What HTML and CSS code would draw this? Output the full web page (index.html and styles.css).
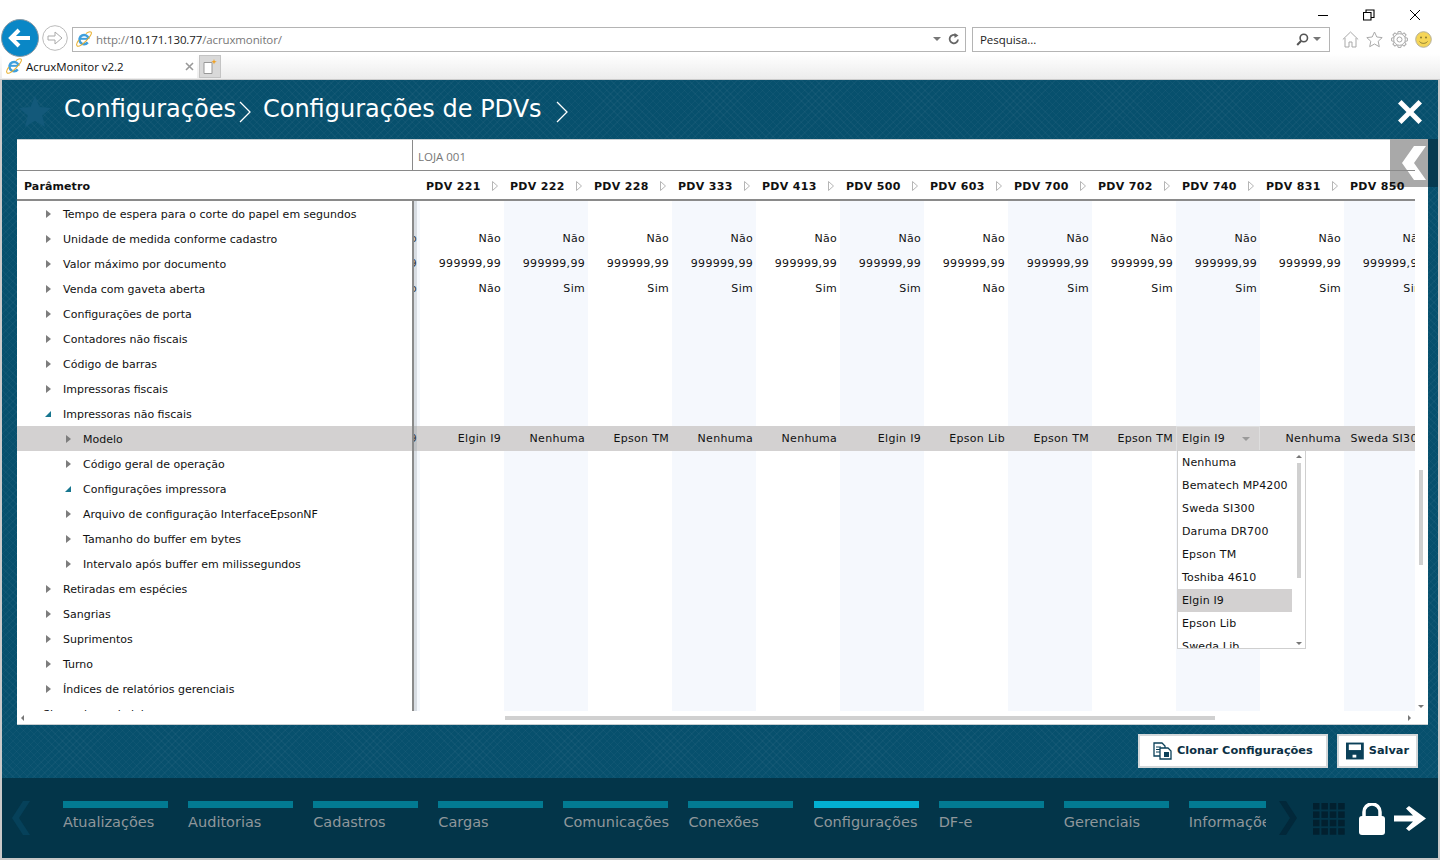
FILE: index.html
```html
<!DOCTYPE html>
<html lang="pt-BR">
<head>
<meta charset="utf-8">
<title>AcruxMonitor v2.2</title>
<link rel="stylesheet" href="styles.css">
</head>
<body>
<svg class="defs" width="0" height="0" aria-hidden="true">
  <symbol id="ie" viewBox="0 0 18 18">
    <path d="M4.500 8.800h9" stroke="#3f9fdc" stroke-width="2.200" fill="none"/>
    <path d="M14.200 8.800a5.200 5.200 0 1 0-1 4" stroke="#3f9fdc" stroke-width="2.800" fill="none"/>
    <path d="M11 3c2.600-1.800 5-2.600 6-1.600 1.200 1.200-1.200 5.400-5.600 9.600S2.600 18 1.200 16.600C.2 15.600 1 13.100 3 10.300" fill="none" stroke="#e8b030" stroke-width="1.200"/>
  </symbol>
  <symbol id="tri" viewBox="0 0 6 10"><path d="M.5.500 5.500 5 .5 9.500z" fill="#fff" stroke="#b5b5b5"/></symbol>
</svg>

<header class="browser">
  <div class="caption">
    <svg class="wbtn" width="12" height="12" viewBox="0 0 12 12"><path d="M1 6.500h10" stroke="#000" fill="none"/></svg>
    <svg class="wbtn" width="12" height="12" viewBox="0 0 12 12"><path d="M.5 3.500h7.500v7.500H.5zM3 3.300V1h8v7.500H8.200" stroke="#000" fill="none" stroke-width="1.100"/></svg>
    <svg class="wbtn" width="12" height="12" viewBox="0 0 12 12"><path d="M1 1l10 10M11 1 1 11" stroke="#000" fill="none"/></svg>
  </div>
  <div class="navrow">
    <svg class="back" width="38" height="38" viewBox="0 0 38 38"><circle cx="19" cy="19" r="18.500" fill="#0a87c6" stroke="#8a9aa5"/><path d="M29 19H11M18 11l-8 8 8 8" fill="none" stroke="#fff" stroke-width="4"/></svg>
    <svg class="forward" width="26" height="26" viewBox="0 0 26 26"><circle cx="13" cy="13" r="12.300" fill="#fff" stroke="#bbb"/><path d="M6 11h7V7l7 6-7 6v-4H6z" fill="#fff" stroke="#aaa"/></svg>
    <div class="address">
      <svg class="ie" width="16" height="16"><use href="#ie"/></svg>
      <span class="url">http://<b>10.171.130.77</b>/acruxmonitor/</span>
      <i class="caret"></i>
      <svg class="refresh" width="12" height="12" viewBox="0 0 12 12"><path d="M10 6.500a4.200 4.200 0 1 1-2-4" fill="none" stroke="#666" stroke-width="1.800"/><path d="M6.500 0v5l4-2.500z" fill="#666"/></svg>
    </div>
    <div class="search">
      <span class="search-text">Pesquisa...</span>
      <svg width="13" height="13" viewBox="0 0 13 13"><circle cx="7.800" cy="5" r="3.700" fill="none" stroke="#555" stroke-width="1.600"/><path d="M5 8 1.200 12" stroke="#555" stroke-width="2"/></svg>
      <i class="caret"></i>
    </div>
    <div class="tools">
      <svg width="17" height="17" viewBox="0 0 17 17"><path d="M.8 8.500 8.500 1l7.700 7.500M3 7v9h4v-5h3v5h4V7" fill="none" stroke="#a9a9a9"/></svg>
      <svg width="17" height="17" viewBox="0 0 17 17"><path d="m8.500 1 2.300 5 5.400.6-4 3.700 1.100 5.400-4.800-2.700-4.800 2.700 1.100-5.400-4-3.700 5.400-.6z" fill="#fff" stroke="#a9a9a9"/></svg>
      <svg width="17" height="17" viewBox="0 0 17 17" fill="none" stroke="#a9a9a9">
        <circle cx="8.500" cy="8.500" r="2.500"/><circle cx="8.500" cy="8.500" r="5.800"/>
        <path d="M6.600 2.800 7.100.6h2.800l.5 2.200"/>
        <path d="M6.600 2.800 7.100.6h2.800l.5 2.200" transform="rotate(45 8.500 8.500)"/>
        <path d="M6.600 2.800 7.100.6h2.800l.5 2.200" transform="rotate(90 8.500 8.500)"/>
        <path d="M6.600 2.800 7.100.6h2.800l.5 2.200" transform="rotate(135 8.500 8.500)"/>
        <path d="M6.600 2.800 7.100.6h2.800l.5 2.200" transform="rotate(180 8.500 8.500)"/>
        <path d="M6.600 2.800 7.100.6h2.800l.5 2.200" transform="rotate(225 8.500 8.500)"/>
        <path d="M6.600 2.800 7.100.6h2.800l.5 2.200" transform="rotate(270 8.500 8.500)"/>
        <path d="M6.600 2.800 7.100.6h2.800l.5 2.200" transform="rotate(315 8.500 8.500)"/>
      </svg>
      <svg width="17" height="17" viewBox="0 0 17 17"><circle cx="8.500" cy="8.500" r="7.800" fill="#f5d557" stroke="#b5b09a"/><circle cx="6" cy="6.500" r="1" fill="#8a7a30"/><circle cx="11" cy="6.500" r="1" fill="#8a7a30"/><path d="M4.500 10.500c2 2.500 6 2.500 8 0" fill="none" stroke="#8a7a30"/></svg>
    </div>
  </div>
  <div class="tabrow">
    <div class="tab">
      <svg width="16" height="16"><use href="#ie"/></svg>
      <span class="tab-title">AcruxMonitor v2.2</span>
      <svg class="tab-x" width="9" height="9" viewBox="0 0 9 9"><path d="M1 1l7 7M8 1 1 8" stroke="#999" stroke-width="1.600"/></svg>
    </div>
    <div class="newtab">
      <svg width="14" height="15" viewBox="0 0 14 15"><path d="M1 3.500h8v11H1z" fill="#fff" stroke="#999"/><path d="m11 0 .7 2 2 .7-2 .7-.7 2-.7-2-2-.7 2-.7z" fill="#f0a020"/></svg>
    </div>
  </div>
</header>

<main class="app">
  <div class="app-head">
    <svg class="star" width="32" height="31" viewBox="0 0 32 31"><path d="m16 0 4.500 11L32 12l-8.800 7.400L26 31l-10-6.300L6 31l2.800-11.600L0 12l11.500-1z" fill="#13597a"/></svg>
    <h1 class="crumb">Configurações</h1>
    <svg class="crumb-sep" width="12" height="22" viewBox="0 0 12 22"><path d="m1 1 10 10L1 21" fill="none" stroke="#fff" stroke-width="1.300"/></svg>
    <h1 class="crumb crumb-2">Configurações de PDVs</h1>
    <svg class="crumb-sep" width="12" height="22" viewBox="0 0 12 22"><path d="m1 1 10 10L1 21" fill="none" stroke="#fff" stroke-width="1.300"/></svg>
    <svg class="close" width="26" height="26" viewBox="0 0 26 26"><path d="M4.500 1 13 9.500 21.500 1 25 4.500 16.500 13l8.500 8.500-3.500 3.500L13 16.500 4.500 25 1 21.500 9.500 13 1 4.500z" fill="#fff"/></svg>
  </div>

  <section class="panel">
    <div class="store-row">
      <div class="store-blank"></div>
      <div class="store-name">LOJA 001</div>
    </div>
    <div class="head-row">
      <div class="param-head">Parâmetro</div>
      <div class="pdv-heads">
        <div class="pdv-head"><span>PDV 221</span><svg width="6" height="10"><use href="#tri"/></svg></div>
        <div class="pdv-head"><span>PDV 222</span><svg width="6" height="10"><use href="#tri"/></svg></div>
        <div class="pdv-head"><span>PDV 228</span><svg width="6" height="10"><use href="#tri"/></svg></div>
        <div class="pdv-head"><span>PDV 333</span><svg width="6" height="10"><use href="#tri"/></svg></div>
        <div class="pdv-head"><span>PDV 413</span><svg width="6" height="10"><use href="#tri"/></svg></div>
        <div class="pdv-head"><span>PDV 500</span><svg width="6" height="10"><use href="#tri"/></svg></div>
        <div class="pdv-head"><span>PDV 603</span><svg width="6" height="10"><use href="#tri"/></svg></div>
        <div class="pdv-head"><span>PDV 700</span><svg width="6" height="10"><use href="#tri"/></svg></div>
        <div class="pdv-head"><span>PDV 702</span><svg width="6" height="10"><use href="#tri"/></svg></div>
        <div class="pdv-head"><span>PDV 740</span><svg width="6" height="10"><use href="#tri"/></svg></div>
        <div class="pdv-head"><span>PDV 831</span><svg width="6" height="10"><use href="#tri"/></svg></div>
        <div class="pdv-head"><span>PDV 850</span><svg width="6" height="10"><use href="#tri"/></svg></div>
      </div>
    </div>

    <div class="grid-body">
      <ul class="tree">
        <li class="node l1"><i class="arr"></i>Tempo de espera para o corte do papel em segundos</li>
        <li class="node l1"><i class="arr"></i>Unidade de medida conforme cadastro</li>
        <li class="node l1"><i class="arr"></i>Valor máximo por documento</li>
        <li class="node l1"><i class="arr"></i>Venda com gaveta aberta</li>
        <li class="node l1"><i class="arr"></i>Configurações de porta</li>
        <li class="node l1"><i class="arr"></i>Contadores não fiscais</li>
        <li class="node l1"><i class="arr"></i>Código de barras</li>
        <li class="node l1"><i class="arr"></i>Impressoras fiscais</li>
        <li class="node l1"><i class="arr open"></i>Impressoras não fiscais</li>
        <li class="node l2 sel"><i class="arr"></i>Modelo</li>
        <li class="node l2"><i class="arr"></i>Código geral de operação</li>
        <li class="node l2"><i class="arr open"></i>Configurações impressora</li>
        <li class="node l2"><i class="arr"></i>Arquivo de configuração InterfaceEpsonNF</li>
        <li class="node l2"><i class="arr"></i>Tamanho do buffer em bytes</li>
        <li class="node l2"><i class="arr"></i>Intervalo após buffer em milissegundos</li>
        <li class="node l1"><i class="arr"></i>Retiradas em espécies</li>
        <li class="node l1"><i class="arr"></i>Sangrias</li>
        <li class="node l1"><i class="arr"></i>Suprimentos</li>
        <li class="node l1"><i class="arr"></i>Turno</li>
        <li class="node l1"><i class="arr"></i>Índices de relatórios gerenciais</li>
        <li class="node l0"><i class="arr open"></i>Sincronismo de lojas</li>
      </ul>
      <div class="data">
        <div class="data-track">
          <div class="col alt"><div class="cell"></div><div class="cell">Não</div><div class="cell">999999,99</div><div class="cell">Não</div><div class="gap"></div><div class="cell sel">Elgin I9</div></div>
          <div class="col"><div class="cell"></div><div class="cell">Não</div><div class="cell">999999,99</div><div class="cell">Não</div><div class="gap"></div><div class="cell sel">Elgin I9</div></div>
          <div class="col alt"><div class="cell"></div><div class="cell">Não</div><div class="cell">999999,99</div><div class="cell">Sim</div><div class="gap"></div><div class="cell sel">Nenhuma</div></div>
          <div class="col"><div class="cell"></div><div class="cell">Não</div><div class="cell">999999,99</div><div class="cell">Sim</div><div class="gap"></div><div class="cell sel">Epson TM</div></div>
          <div class="col alt"><div class="cell"></div><div class="cell">Não</div><div class="cell">999999,99</div><div class="cell">Sim</div><div class="gap"></div><div class="cell sel">Nenhuma</div></div>
          <div class="col"><div class="cell"></div><div class="cell">Não</div><div class="cell">999999,99</div><div class="cell">Sim</div><div class="gap"></div><div class="cell sel">Nenhuma</div></div>
          <div class="col alt"><div class="cell"></div><div class="cell">Não</div><div class="cell">999999,99</div><div class="cell">Sim</div><div class="gap"></div><div class="cell sel">Elgin I9</div></div>
          <div class="col"><div class="cell"></div><div class="cell">Não</div><div class="cell">999999,99</div><div class="cell">Não</div><div class="gap"></div><div class="cell sel">Epson Lib</div></div>
          <div class="col alt"><div class="cell"></div><div class="cell">Não</div><div class="cell">999999,99</div><div class="cell">Sim</div><div class="gap"></div><div class="cell sel">Epson TM</div></div>
          <div class="col"><div class="cell"></div><div class="cell">Não</div><div class="cell">999999,99</div><div class="cell">Sim</div><div class="gap"></div><div class="cell sel">Epson TM</div></div>
          <div class="col alt"><div class="cell"></div><div class="cell">Não</div><div class="cell">999999,99</div><div class="cell">Sim</div><div class="gap"></div><div class="cell sel combo"><span>Elgin I9</span><i class="combo-arrow"></i></div></div>
          <div class="col"><div class="cell"></div><div class="cell">Não</div><div class="cell">999999,99</div><div class="cell">Sim</div><div class="gap"></div><div class="cell sel">Nenhuma</div></div>
          <div class="col alt"><div class="cell"></div><div class="cell">Não</div><div class="cell">999999,99</div><div class="cell">Sim</div><div class="gap"></div><div class="cell sel">Sweda SI300</div></div>
        </div>
      </div>
      <div class="vscroll"><i class="vthumb"></i><i class="sc-down"></i></div>
    </div>
    <div class="hscroll"><i class="sc-left"></i><i class="hthumb"></i><i class="sc-right"></i></div>

    <div class="dropdown">
      <ul class="dd-list">
        <li>Nenhuma</li>
        <li>Bematech MP4200</li>
        <li>Sweda SI300</li>
        <li>Daruma DR700</li>
        <li>Epson TM</li>
        <li>Toshiba 4610</li>
        <li class="on">Elgin I9</li>
        <li>Epson Lib</li>
        <li>Sweda Lib</li>
      </ul>
      <div class="dd-scroll"><i class="sc-up"></i><i class="dd-thumb"></i><i class="sc-down"></i></div>
    </div>
  </section>

  <div class="collapse-tab">
    <svg width="25" height="34" viewBox="0 0 25 34"><path d="M24 0h-12L0 17l12 17h12L12 17z" fill="#fff"/></svg>
  </div>

  <div class="actions">
    <button class="btn">
      <svg width="19" height="18" viewBox="0 0 19 18"><path d="M1 1h8l3 3v10H1z" fill="#fff" stroke="#0b4059" stroke-width="1.300"/><path d="M3 5h5M3 7.500h5M3 10h5" stroke="#0b4059"/><path d="M7 6h8l3 3v8H7z" fill="#fff" stroke="#0b4059" stroke-width="1.300"/><rect x="11" y="10" width="5" height="5" fill="#0b4059"/></svg>
      <span class="btn-label">Clonar Configurações</span>
    </button>
    <button class="btn">
      <svg width="19" height="18" viewBox="0 0 19 18"><path d="M0 0h19v18H0z" fill="#0b4059"/><rect x="3" y="2" width="13" height="6" fill="#fff"/><rect x="7" y="13" width="4" height="3" fill="#fff"/></svg>
      <span class="btn-label">Salvar</span>
    </button>
  </div>

  <footer class="dock">
    <svg class="dock-prev" width="18" height="34" viewBox="0 0 18 34"><path d="M18 0H11L0 17l11 17h7L7 17z" fill="#06415a"/></svg>
    <nav class="dock-nav">
      <a class="dock-item"><i class="bar"></i>Atualizações</a>
      <a class="dock-item"><i class="bar"></i>Auditorias</a>
      <a class="dock-item"><i class="bar"></i>Cadastros</a>
      <a class="dock-item"><i class="bar"></i>Cargas</a>
      <a class="dock-item"><i class="bar"></i>Comunicações</a>
      <a class="dock-item"><i class="bar"></i>Conexões</a>
      <a class="dock-item active"><i class="bar"></i>Configurações</a>
      <a class="dock-item"><i class="bar"></i>DF-e</a>
      <a class="dock-item"><i class="bar"></i>Gerenciais</a>
      <a class="dock-item"><i class="bar"></i>Informações</a>
    </nav>
    <svg class="dock-next" width="18" height="34" viewBox="0 0 18 34"><path d="M0 0h7l11 17L7 34H0l11-17z" fill="#02283a"/></svg>
    <svg class="dock-grid" width="32" height="32" viewBox="0 0 32 32" fill="#02202f">
      <rect width="6.500" height="6.500"/><rect x="8.400" width="6.500" height="6.500"/><rect x="16.800" width="6.500" height="6.500"/><rect x="25.200" width="6.500" height="6.500"/>
      <rect y="8.400" width="6.500" height="6.500"/><rect x="8.400" y="8.400" width="6.500" height="6.500"/><rect x="16.800" y="8.400" width="6.500" height="6.500"/><rect x="25.200" y="8.400" width="6.500" height="6.500"/>
      <rect y="16.800" width="6.500" height="6.500"/><rect x="8.400" y="16.800" width="6.500" height="6.500"/><rect x="16.800" y="16.800" width="6.500" height="6.500"/><rect x="25.200" y="16.800" width="6.500" height="6.500"/>
      <rect y="25.200" width="6.500" height="6.500"/><rect x="8.400" y="25.200" width="6.500" height="6.500"/><rect x="16.800" y="25.200" width="6.500" height="6.500"/><rect x="25.200" y="25.200" width="6.500" height="6.500"/>
    </svg>
    <svg class="dock-lock" width="26" height="32" viewBox="0 0 26 32"><path d="M5 14V9a8 8 0 0 1 16 0v5" fill="none" stroke="#fff" stroke-width="3.500"/><rect y="13" width="26" height="19" rx="3" fill="#fff"/></svg>
    <svg class="dock-go" width="32" height="25" viewBox="0 0 32 25"><path d="M0 9.500h19L12 2.500 15 0l17 12.500L15 25l-3-2.500 7-7H0z" fill="#fff"/></svg>
  </footer>
</main>
</body>
</html>
```
FILE: styles.css
```css
* { box-sizing: border-box; }
html, body { margin: 0; padding: 0; height: 860px; overflow: hidden; background: #fff; }
body { font-family: "DejaVu Sans", Verdana, sans-serif; font-size: 11px; color: #111; }
ul { list-style: none; margin: 0; padding: 0; }
.defs { position: absolute; }

/* browser chrome */
.browser { height: 80px; background: #fff; font-family: "Open Sans", "Noto Sans", sans-serif; font-size: 11.500px; letter-spacing: -.05px; position: relative; }
.caption { height: 27px; display: flex; justify-content: flex-end; align-items: center; gap: 34px; padding: 2px 19px 0 0; }
.navrow { height: 24px; display: flex; align-items: center; padding-left: 72px; }
.back { position: absolute; left: 1px; top: 19px; }
.forward { position: absolute; left: 42px; top: 25px; }
.address { width: 894px; height: 25px; border: 1px solid #b4b4b4; display: flex; align-items: center; padding: 0 4px 0 3px; background: #fff; }
.ie { margin-right: 4px; }
.url { flex: 1; color: #777; letter-spacing: -.12px; }
.url b { font-weight: 400; color: #222; }
.caret { width: 0; height: 0; border: 4px solid transparent; border-top-color: #777; border-bottom: 0; }
.refresh { margin-left: 7px; margin-right: 1px; }
.search { width: 358px; height: 25px; margin-left: 6px; border: 1px solid #b4b4b4; display: flex; align-items: center; padding: 0 8px 0 7px; gap: 4px; }
.search-text { flex: 1; color: #222; }
.tools { display: flex; gap: 7.300px; margin-left: 12px; }
.tabrow { height: 29px; display: flex; align-items: flex-end; padding: 0 0 0 2px; background: linear-gradient(#fff 10%, #ececec); gap: 2px; border-bottom: 1px solid #ccc; }
.tab { width: 195px; height: 24px; background: #fff; display: flex; align-items: center; padding: 0 3px 0 4px; margin-bottom: 1px; }
.tab-title { flex: 1; margin-left: 4px; color: #111; }
.newtab { width: 22px; height: 23px; background: #d9d9d9; border: 1px solid #c4c4c4; display: flex; align-items: center; justify-content: center; margin-bottom: 1px; }

/* app */
.app { height: 780px; margin: 0; border: 2px solid #c9c9c9; border-top: 0; position: relative;
  background-color: #07506d;
  background-image: repeating-linear-gradient(45deg, rgba(255,255,255,.03) 0 1px, transparent 1px 5px), repeating-linear-gradient(-45deg, rgba(255,255,255,.03) 0 1px, transparent 1px 5px);
  display: flex; flex-direction: column; }
.app-head { height: 60px; display: flex; align-items: center; padding-left: 17px; color: #fff; flex: none; }
.star { margin-right: 13px; flex: none; margin-top: 2px; }
.crumb { margin: 0 0 2px; font-size: 24px; font-weight: 400; line-height: 30px; }
.crumb-sep { margin-left: 3px; margin-right: 12px; flex: none; margin-top: 3px; }
.crumb-2 + .crumb-sep { margin-left: 14px; }
.close { margin-left: auto; margin-right: 15px; margin-top: 4px; }

.panel { width: 1411px; height: 584px; margin-left: 15px; background: #fff; position: relative; box-shadow: 0 -1px 0 #c9cfd2, 0 1px 0 #c9cfd2; flex: none; display: flex; flex-direction: column; }
.store-row { height: 31px; display: flex; border-bottom: 1px solid #8a8a8a; margin-right: 13px; position: relative; z-index: 4; flex: none; }
.store-blank { width: 396px; border-right: 1px solid #8a8a8a; }
.store-name { padding: 0 5px; line-height: 33px; font-size: 11.500px; font-family: "Open Sans", sans-serif; color: #777; }
.head-row { height: 30px; display: flex; border-bottom: 2px solid #8a8a8a; margin-right: 13px; padding-top: 2px; overflow: hidden; font-weight: 700; align-items: center; position: relative; z-index: 4; flex: none; }
.param-head { width: 403px; padding-left: 7px; flex: none; letter-spacing: .1px; }
.pdv-heads { display: flex; flex: none; }
.pdv-head { width: 84px; flex: none; padding-left: 6px; display: flex; align-items: center; gap: 11px; white-space: nowrap; letter-spacing: .3px; }
.pdv-head svg { flex: none; }

.grid-body { height: 510px; display: flex; overflow: hidden; flex: none; }
.tree { width: 395px; flex: none; overflow: hidden; }
.node { height: 25px; padding-top: 2px; white-space: nowrap; display: flex; align-items: center; }
.l0 { padding-left: 9px; }
.l1 { padding-left: 29px; }
.l2 { padding-left: 49px; }
.node.sel { background: #d3d1d1; }
.arr { width: 17px; flex: none; height: 9px; position: relative; display: block; }
.arr::before { content: ""; position: absolute; left: 0; top: 0; border-left: 5px solid #7d7d7d; border-top: 4.500px solid transparent; border-bottom: 4.500px solid transparent; }
.arr.open::before { border: 0; border-right: 6px solid #17768f; border-top: 6px solid transparent; top: 1px; left: -1px; }

.data { flex: none; width: 1003px; overflow: hidden; position: relative; border-left: 2px solid #8a8a8a; }
.data::before { content: ""; position: absolute; left: 0; top: 0; bottom: 0; width: 3px; background: rgba(140,150,160,.28); z-index: 1; }
.data-track { display: flex; margin-left: -78px; height: 100%; }
.col { width: 84px; flex: none; height: 100%; }
.col.alt { background: #f5f8fd; }
.cell { height: 25px; line-height: 25px; text-align: right; padding-right: 3px; white-space: nowrap; direction: rtl; letter-spacing: .3px; }
.gap { height: 125px; }
.cell.sel { background: #d3d1d1; }
.cell.combo { display: flex; align-items: center; justify-content: space-between; direction: ltr; text-align: left; padding: 0 9px 0 5px; border: 1px solid #dedede; }
.combo-arrow { width: 0; height: 0; border: 4px solid transparent; border-top-color: #9a9a9a; border-bottom: 0; }

.vscroll { width: 13px; flex: none; position: relative; }
.vthumb { display: block; width: 4px; height: 95px; background: #d0d0d0; margin: 269px 0 0 4px; }
.sc-down { position: absolute; bottom: 3px; left: 3px; width: 0; height: 0; border: 3px solid transparent; border-top: 3px solid #777; border-bottom: 0; }

.hscroll { height: 13px; display: flex; align-items: center; flex: none; }
.sc-left { margin-left: 4px; border: 3px solid transparent; border-right: 3px solid #777; border-left: 0; }
.hthumb { width: 710px; height: 4px; background: #d0d0d0; margin-left: 481px; }
.sc-right { margin-left: 193px; border: 3px solid transparent; border-left: 3px solid #777; border-right: 0; }

.dropdown { position: absolute; left: 1160px; top: 310px; width: 129px; height: 199px; background: #fff; border: 1px solid #cfcfcf; display: flex; overflow: hidden; z-index: 2; }
.dd-list { width: 114px; flex: none; }
.dd-list li { height: 23px; line-height: 23px; padding-left: 4px; white-space: nowrap; letter-spacing: .15px; }
.dd-list li.on { background: #d3d1d1; }
.dd-scroll { flex: 1; position: relative; }
.dd-thumb { display: block; width: 4px; height: 115px; background: #d0d0d0; margin: 12px 0 0 5px; }
.sc-up { position: absolute; top: 4px; left: 4px; border: 3px solid transparent; border-bottom: 3px solid #777; border-top: 0; }
.dd-scroll .sc-down { left: 4px; }

.collapse-tab { position: absolute; left: 1388px; top: 59px; width: 48px; height: 48px; background: linear-gradient(to right, #a9a9a9 0 38px, #063a50 38px); display: flex; align-items: center; padding-left: 12px; z-index: 3; }

.actions { height: 54px; display: flex; justify-content: flex-end; align-items: flex-start; padding: 10px 20px 0 0; gap: 9px; flex: none; }
.btn { height: 34px; background: #fff; border: 2px solid #d4d8da; font: 700 11.300px "DejaVu Sans", Verdana, sans-serif; color: #0b3044; display: flex; align-items: center; gap: 5px; padding: 0 7px; }
.btn-label { margin-top: -2px; }
.btn:first-child { width: 190px; padding-left: 13px; }
.btn:last-child { width: 81px; }

.dock { height: 80px; background: #033549; display: flex; align-items: flex-start; padding-top: 23px; flex: none; color: #8f979b; }
.dock-prev { margin-left: 10px; flex: none; }
.dock-nav { margin-left: 33px; width: 1203px; display: flex; overflow: hidden; flex: none; }
.dock-item { width: 125.100px; padding-right: 20px; flex: none; font-size: 14.500px; line-height: 20px; white-space: nowrap; }
.dock-item .bar { display: block; height: 7px; width: 105px; background: #027a92; margin-bottom: 4px; }
.dock-item.active .bar { background: #02afd2; }
.dock-next { margin-left: 13px; flex: none; }
.dock-grid { margin-left: 16px; margin-top: 2px; flex: none; }
.dock-lock { margin-left: 14px; margin-top: 2px; flex: none; }
.dock-go { margin-left: 9px; margin-top: 5px; flex: none; }
```
